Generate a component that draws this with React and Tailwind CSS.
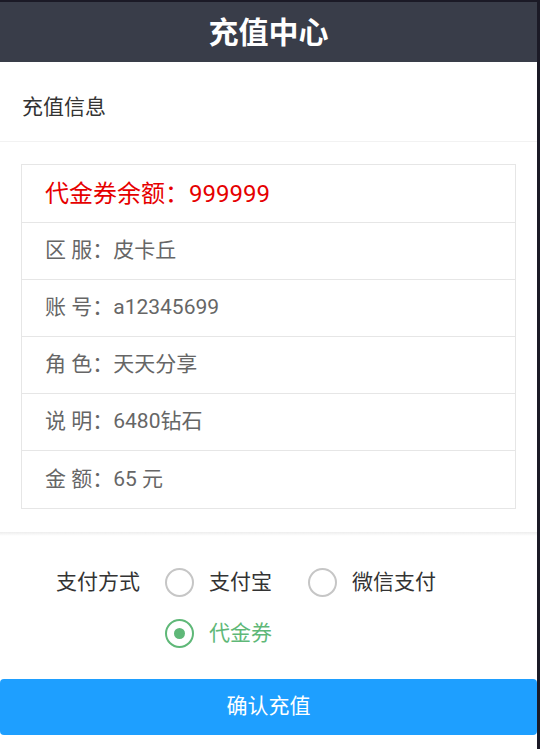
import React from 'react';

const rows = [
  { label: '区 服：', value: '皮卡丘' },
  { label: '账 号：', value: 'a12345699' },
  { label: '角 色：', value: '天天分享' },
  { label: '说 明：', value: '6480钻石' },
  { label: '金 额：', value: '65 元' },
];

function Radio({ checked, label, last }) {
  return (
    <div className={`flex items-center ${last ? '' : 'mr-[36px]'}`}>
      <div
        className={`w-[29px] h-[29px] rounded-full border-2 flex items-center justify-center ${
          checked ? 'border-[#5fb878]' : 'border-[#c6c6c6]'
        }`}
      >
        {checked && <div className="w-[11px] h-[11px] rounded-full bg-[#5fb878]" />}
      </div>
      <span className={`ml-[15px] text-[21px] leading-none ${checked ? 'text-[#5fb878]' : 'text-[#333]'}`}>
        {label}
      </span>
    </div>
  );
}

export default function App() {
  return (
    <div className="w-[540px] h-[749px] bg-[#1b1a26] pt-[2px] pr-[3px] flex font-['Roboto','Noto_Sans_CJK_SC',sans-serif]">
      <div className="flex-1 bg-white flex flex-col">
        {/* header */}
        <div className="h-[60px] bg-[#393d49] flex items-center justify-center text-white text-[30px] font-bold">
          充值中心
        </div>

        {/* section title */}
        <div className="h-[80px] pt-[12px] px-[22px] flex items-center border-b border-[#f2f2f2] text-[21px] text-[#333]">
          充值信息
        </div>

        {/* info card */}
        <div className="pt-[22px] pb-[23px] pl-[21px] pr-[21px]">
          <div className="border border-[#e6e6e6] divide-y divide-[#e6e6e6]">
            <div className="h-[58px] pl-[23px] flex items-center text-[24px] text-[#e60000]">
              代金券余额：999999
            </div>
            {rows.map((r) => (
              <div key={r.label} className="h-[57px] pl-[23px] flex items-center text-[21px] text-[#666]">
                {r.label}
                {r.value}
              </div>
            ))}
          </div>
        </div>

        <div className="h-[4px] bg-linear-to-b from-[#ededed] to-white" />

        {/* payment */}
        <div className="mt-[32px] pl-[56px] flex items-center">
          <span className="text-[21px] leading-none text-[#333] mr-[25px]">支付方式</span>
          <Radio label="支付宝" />
          <Radio label="微信支付" last />
        </div>
        <div className="mt-[22px] pl-[165px] flex items-center">
          <Radio label="代金券" checked last />
        </div>

        <button className="mt-[31px] h-[56px] w-full rounded-[4px] bg-[#1e9fff] text-white text-[21px] flex items-center justify-center">
          确认充值
        </button>
      </div>
    </div>
  );
}
